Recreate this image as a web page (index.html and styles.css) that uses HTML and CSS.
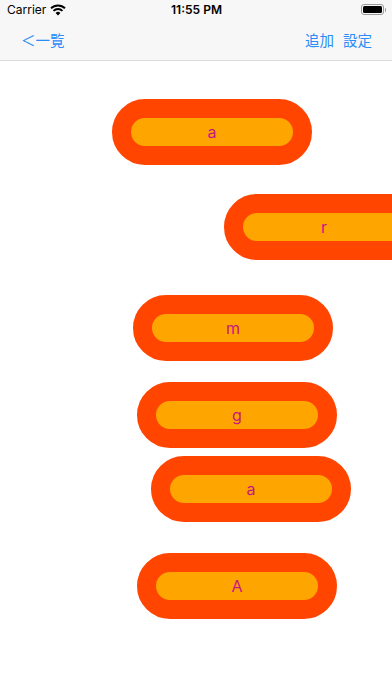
FILE: index.html
```html
<!DOCTYPE html>
<html lang="ja">
<head>
    <meta charset="UTF-8">
    <meta name="viewport" content="width=device-width, initial-scale=1.0">
    <title>一覧</title>
    <link rel="stylesheet" href="styles.css">
</head>
<body>
    <div class="header">
        <div class="status-bar">
            <div class="status-left">
                <span>Carrier</span>
                <svg class="wifi" width="16" height="12" viewBox="0 0 16 12">
                    <path d="M8 11.5 L5.6 9 A3.4 3.4 0 0 1 10.4 9 Z" fill="#000"/>
                    <path d="M3.5 6.9 A6.4 6.4 0 0 1 12.5 6.9" stroke="#000" stroke-width="1.9" fill="none"/>
                    <path d="M1 4.3 A10 10 0 0 1 15 4.3" stroke="#000" stroke-width="1.9" fill="none"/>
                </svg>
            </div>
            <div class="status-time">11:55 PM</div>
            <div class="status-right">
                <div class="battery"><div class="battery-level"></div></div>
                <div class="battery-nub"></div>
            </div>
        </div>
        <div class="nav-bar">
            <button class="nav-button">＜一覧</button>
            <div class="nav-right">
                <button class="nav-button">追加</button>
                <button class="nav-button">設定</button>
            </div>
        </div>
    </div>

    <div class="canvas">
        <div class="pill" style="left: 112px; top: 38px;"><div class="pill-inner">a</div></div>
        <div class="pill" style="left: 224px; top: 133px;"><div class="pill-inner">r</div></div>
        <div class="pill" style="left: 133px; top: 234px;"><div class="pill-inner">m</div></div>
        <div class="pill" style="left: 137px; top: 321px;"><div class="pill-inner">g</div></div>
        <div class="pill" style="left: 151px; top: 395px;"><div class="pill-inner">a</div></div>
        <div class="pill" style="left: 137px; top: 492px;"><div class="pill-inner">A</div></div>
    </div>
</body>
</html>
```

FILE: styles.css
```css
body {
    font-family: Inter, Roboto, "Noto Sans CJK JP", sans-serif;
    background-color: white;
    margin: 0;
    padding: 0;
    width: 392px;
    height: 696px;
    overflow: hidden;
}
.header {
    background-color: #f7f7f7;
    border-bottom: 1px solid #dcdcdc;
}
.status-bar {
    height: 19px;
    display: flex;
    align-items: center;
    justify-content: space-between;
    padding: 0 6px 0 7px;
    font-size: 12px;
    color: #000;
}
.status-left {
    display: flex;
    align-items: center;
    gap: 4px;
    width: 80px;
}
.status-time {
    font-weight: 600;
    font-size: 12px;
}
.status-right {
    display: flex;
    align-items: center;
    justify-content: flex-end;
    width: 80px;
}
.battery {
    border: 1px solid #9a9a9a;
    border-radius: 3px;
    padding: 1px;
    box-sizing: border-box;
    width: 23px;
    height: 11px;
}
.battery-level {
    background-color: #000;
    border-radius: 1.5px;
    height: 100%;
}
.battery-nub {
    width: 1.5px;
    height: 4px;
    background-color: #9a9a9a;
    border-radius: 0 1px 1px 0;
    margin-left: 1px;
}
.nav-bar {
    height: 41px;
    display: flex;
    align-items: center;
    justify-content: space-between;
    padding: 0 20px 0 21px;
}
.nav-right {
    display: flex;
    gap: 9px;
}
.nav-button {
    background: none;
    border: none;
    padding: 0;
    font-family: Inter, Roboto, "Noto Sans CJK JP", sans-serif;
    font-size: 14.5px;
    color: #2a8cf7;
    cursor: pointer;
}
.canvas {
    position: relative;
    height: 635px;
    overflow: hidden;
}
.pill {
    position: absolute;
    width: 200px;
    height: 66px;
    box-sizing: border-box;
    border: 19px solid #ff4500;
    border-radius: 33px;
    background-color: #ffa500;
}
.pill-inner {
    height: 100%;
    display: flex;
    align-items: center;
    justify-content: center;
    font-size: 16px;
    color: #c71585;
}
```
